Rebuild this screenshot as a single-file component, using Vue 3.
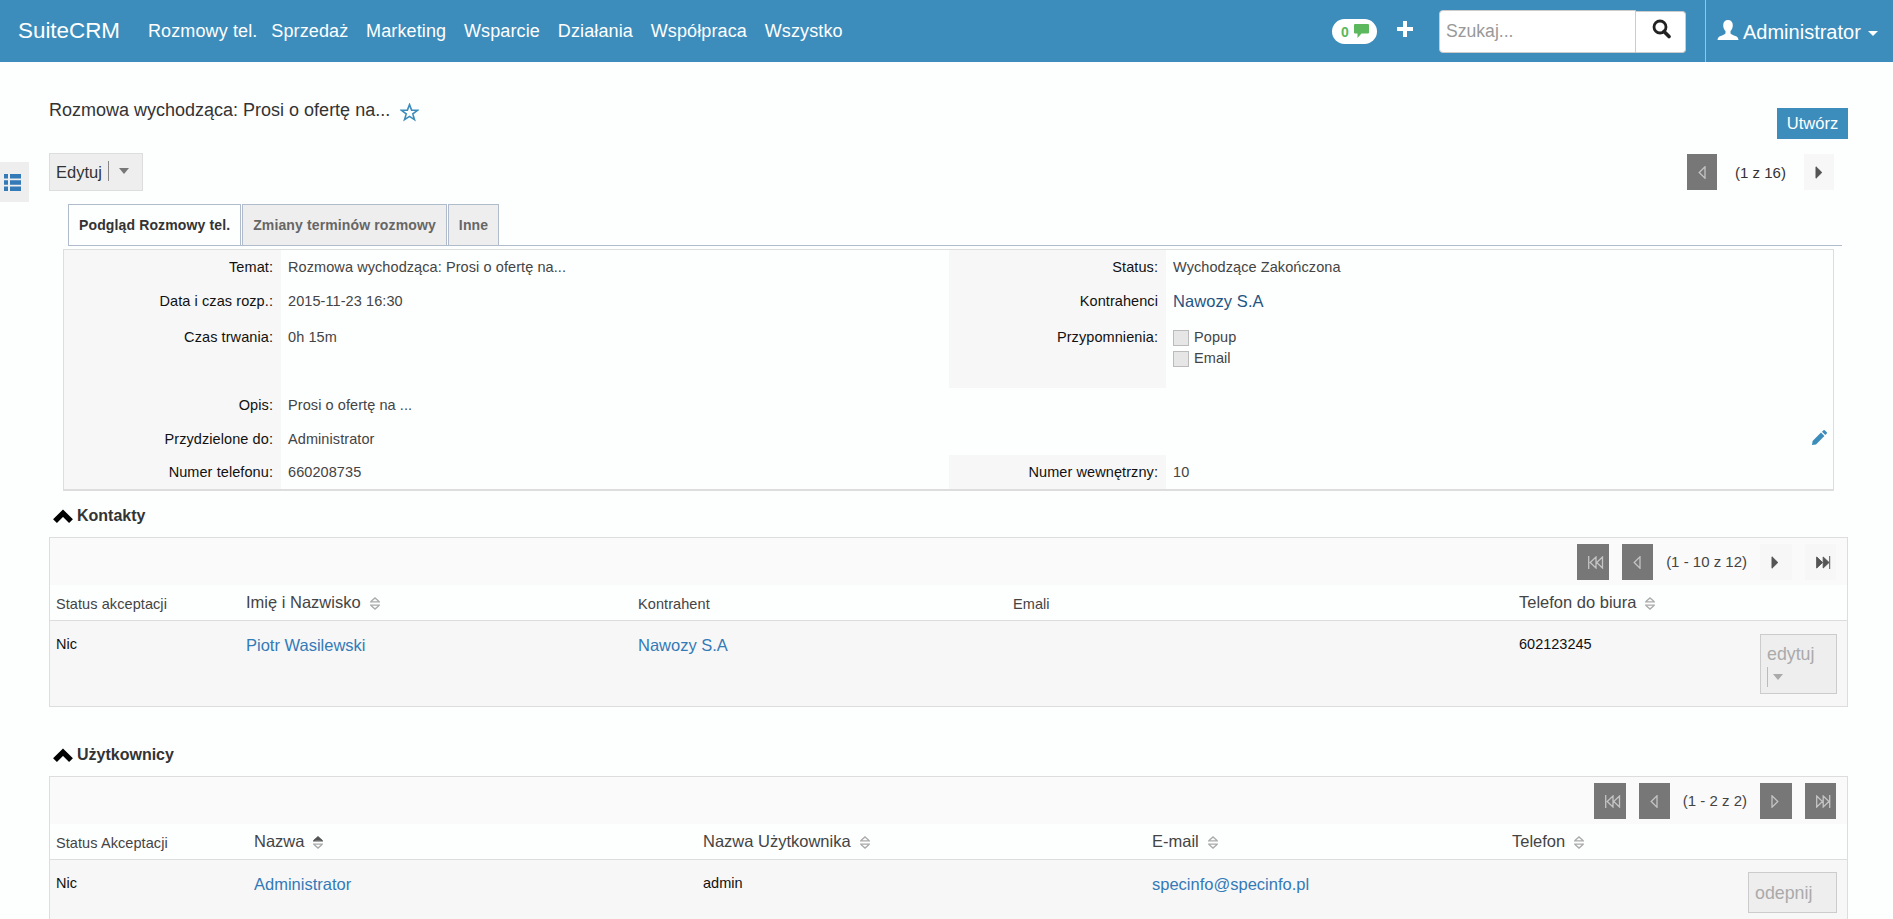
<template>
    <div class="page">
        <header class="navbar">
            <a class="brand">SuiteCRM</a>
            <nav class="menu">
                <a v-for="item in menu" :key="item">{{ item }}</a>
            </nav>

            <div class="badge">
                <span>0</span>
                <svg width="15" height="14" viewBox="0 0 15 14">
                    <path d="M1 0h13q1 0 1 1v7.500q0 1-1 1H7.500L3.500 14V9.500H1q-1 0-1-1V1q0-1 1-1z" fill="#5cb85c" />
                </svg>
            </div>
            <svg class="plus" width="16" height="16" viewBox="0 0 16 16">
                <path d="M6 0h4v6h6v4h-6v6H6v-6H0V6h6z" fill="#fff" />
            </svg>

            <div class="search">
                <input v-model="query" type="text" placeholder="Szukaj..." class="search-input" />
                <button class="search-btn">
                    <svg width="20" height="20" viewBox="0 0 20 20">
                        <circle cx="8" cy="8" r="6" fill="none" stroke="#222" stroke-width="2.800" />
                        <path d="M12 12.500l5 5" stroke="#222" stroke-width="3.600" stroke-linecap="round" />
                    </svg>
                </button>
            </div>

            <div class="user">
                <svg width="22" height="20" viewBox="0 0 22 20">
                    <path d="M11 0c3 0 4.800 2 4.800 5.200 0 2.400-.9 4.600-2.300 5.900v2.300c1 1.100 3.500 1.800 5.700 2.900 1.500.8 2 1.800 2.300 3.700H.5c.3-1.900.8-2.900 2.300-3.700 2.200-1.100 4.700-1.800 5.700-2.900v-2.300C7.100 9.800 6.200 7.600 6.200 5.200 6.200 2 8 0 11 0z" fill="#fff" />
                </svg>
                <span>Administrator</span>
                <i class="caret"></i>
            </div>
        </header>

        <div class="sidebar-toggle">
            <svg width="17" height="17" viewBox="0 0 17 17" fill="#337ab7">
                <path d="M0 0h4v4.500H0zM6 0h11v4.500H6zM0 6.200h4v4.500H0zM6 6.200h11v4.500H6zM0 12.400h4V17H0zM6 12.400h11V17H6z" />
            </svg>
        </div>

        <main class="content">
            <div class="title-row">
                <h2>Rozmowa wychodząca: Prosi o ofertę na...</h2>
                <svg class="star" width="19" height="19" viewBox="0 0 19 19">
                    <path d="M9.500 1.600l2.100 5.500 5.900.2-4.700 3.600 1.700 5.800-5-3.300-5 3.300 1.700-5.800L1.500 7.300l5.900-.2z" fill="none" stroke="#3c8dbc" stroke-width="1.600" />
                </svg>
                <button class="create-btn">Utwórz</button>
            </div>

            <div class="action-row">
                <button class="edit-btn">
                    <span>Edytuj</span>
                    <i class="split"></i>
                    <i class="arrow"></i>
                </button>
                <div class="record-pager">
                    <span class="pg off"><svg width="8" height="13" viewBox="0 0 8 13"><path :d="icons.prev" /></svg></span>
                    <span class="record-count">(1 z 16)</span>
                    <span class="pg"><svg width="8" height="13" viewBox="0 0 8 13"><path :d="icons.next" /></svg></span>
                </div>
            </div>

            <div class="tabs">
                <a v-for="(tab, i) in tabs" :key="tab" :class="{ active: activeTab === i }" @click="activeTab = i">{{ tab }}</a>
            </div>

            <div class="detail">
                <template v-for="row in details" :key="row.label">
                    <div class="label">{{ row.label }}</div>
                    <div class="value">{{ row.value }}</div>
                    <div :class="{ label: row.label2 }">{{ row.label2 }}</div>
                    <div class="value">
                        <a v-if="row.link" class="account">{{ row.link }}</a>
                        <div v-else-if="row.reminders" class="reminders">
                            <div v-for="name in row.reminders" :key="name" class="reminder">
                                <i class="checkbox"></i>{{ name }}
                            </div>
                        </div>
                        <svg v-else-if="row.pencil" class="pencil" width="15" height="15" viewBox="0 0 15 15">
                            <path d="M0 15l.6-4L9 2.600 12.400 6 4 14.400zM10 1.700L11.500.2q.6-.4 1.200 0l2.100 2.100q.4.600 0 1.200L13.300 5z" fill="#3c8dbc" />
                        </svg>
                        <template v-else>{{ row.value2 }}</template>
                    </div>
                </template>
            </div>

            <section v-for="panel in panels" :key="panel.title" class="subpanel" :class="panel.name">
                <h3>
                    <svg width="20" height="15" viewBox="0 0 20 15">
                        <path d="M2 12.200l8-8 8 8" fill="none" stroke="#000" stroke-width="5.400" />
                    </svg>
                    {{ panel.title }}
                </h3>
                <div class="list">
                    <div class="list-pager">
                        <span class="pg off wide"><svg width="16" height="13" viewBox="0 0 16 13"><path :d="icons.first" /></svg></span>
                        <span class="pg off"><svg width="8" height="13" viewBox="0 0 8 13"><path :d="icons.prev" /></svg></span>
                        <span class="count">{{ panel.count }}</span>
                        <span class="pg wide" :class="{ off: panel.last }"><svg width="8" height="13" viewBox="0 0 8 13"><path :d="icons.next" /></svg></span>
                        <span class="pg" :class="{ off: panel.last }"><svg width="16" height="13" viewBox="0 0 16 13"><path :d="icons.end" /></svg></span>
                    </div>
                    <div class="list-head cols">
                        <div v-for="col in panel.columns" :key="col.text" :class="{ sortable: col.sort }">
                            <span>{{ col.text }}</span>
                            <svg v-if="col.sort" width="10" height="13" viewBox="0 0 10 13" stroke="#aaa" stroke-width="1.300" fill="none">
                                <path d="M1.200 4.300L5 .9l3.800 3.400M0 4.800h10" :stroke="col.sort === 'asc' ? '#555' : '#aaa'" :fill="col.sort === 'asc' ? '#555' : 'none'" />
                                <path d="M1.200 8.700L5 12.100l3.800-3.400M0 8.200h10" />
                            </svg>
                        </div>
                    </div>
                    <div class="list-row cols">
                        <div v-for="(cell, i) in panel.cells" :key="i">
                            <a v-if="cell.link">{{ cell.link }}</a>
                            <span v-else>{{ cell.text }}</span>
                        </div>
                        <button class="row-btn">
                            <span>{{ panel.action }}</span>
                            <span v-if="panel.split" class="row-split"><i class="split"></i><i class="arrow"></i></span>
                        </button>
                    </div>
                </div>
            </section>
        </main>
    </div>
</template>

<script setup>
import { ref } from 'vue'

const query = ref('')
const activeTab = ref(0)

const menu = ['Rozmowy tel.', 'Sprzedaż', 'Marketing', 'Wsparcie', 'Działania', 'Współpraca', 'Wszystko']
const tabs = ['Podgląd Rozmowy tel.', 'Zmiany terminów rozmowy', 'Inne']

const icons = {
    first: 'M.7 0v13M8 1v11L2.200 6.500zM14.500 1v11L8.700 6.500z',
    prev: 'M7 .8v11.400L1.200 6.500z',
    next: 'M1 .8v11.400l5.800-5.700z',
    end: 'M.7 1v11l5.800-5.500zM7.200 1v11L13 6.500zM13.700 0v13'
}

const details = [
    { label: 'Temat:', value: 'Rozmowa wychodząca: Prosi o ofertę na...', label2: 'Status:', value2: 'Wychodzące Zakończona' },
    { label: 'Data i czas rozp.:', value: '2015-11-23 16:30', label2: 'Kontrahenci', link: 'Nawozy S.A' },
    { label: 'Czas trwania:', value: '0h 15m', label2: 'Przypomnienia:', reminders: ['Popup', 'Email'] },
    { label: 'Opis:', value: 'Prosi o ofertę na ...' },
    { label: 'Przydzielone do:', value: 'Administrator', pencil: true },
    { label: 'Numer telefonu:', value: '660208735', label2: 'Numer wewnętrzny:', value2: '10' }
]

const panels = [
    {
        name: 'contacts',
        title: 'Kontakty',
        count: '(1 - 10 z 12)',
        last: false,
        action: 'edytuj',
        split: true,
        columns: [
            { text: 'Status akceptacji' },
            { text: 'Imię i Nazwisko', sort: 'none' },
            { text: 'Kontrahent' },
            { text: 'Emali' },
            { text: 'Telefon do biura', sort: 'none' }
        ],
        cells: [{ text: 'Nic' }, { link: 'Piotr Wasilewski' }, { link: 'Nawozy S.A' }, { text: '' }, { text: '602123245' }]
    },
    {
        name: 'users',
        title: 'Użytkownicy',
        count: '(1 - 2 z 2)',
        last: true,
        action: 'odepnij',
        columns: [
            { text: 'Status Akceptacji' },
            { text: 'Nazwa', sort: 'asc' },
            { text: 'Nazwa Użytkownika', sort: 'none' },
            { text: 'E-mail', sort: 'none' },
            { text: 'Telefon', sort: 'none' }
        ],
        cells: [{ text: 'Nic' }, { link: 'Administrator' }, { text: 'admin' }, { link: 'specinfo@specinfo.pl' }, { text: '' }]
    }
]
</script>

<style>
body {
    margin: 0;
    background: #fdfefe;
}
</style>

<style scoped>
.page {
    position: relative;
    height: 919px;
    overflow: hidden;
    font-family: "Liberation Sans", Arial, sans-serif;
    font-size: 14.5px;
    color: #444;
}

.page * {
    box-sizing: border-box;
}

button {
    font-family: inherit;
    padding: 0;
    border-radius: 0;
}

svg {
    display: block;
    flex-shrink: 0;
}

.navbar {
    height: 62px;
    background: #3c8dbc;
    color: #fff;
    display: flex;
    align-items: center;
    padding-left: 18px;
}

.brand {
    width: 130px;
    font-size: 22.4px;
    line-height: 62px;
}

.menu {
    display: flex;
    gap: 17.8px;
    flex: 1;
    font-size: 18px;
    line-height: 62px;
    letter-spacing: 0.12px;
}

.menu a:first-child {
    margin-right: -4px;
}

.badge {
    display: flex;
    align-items: center;
    gap: 5px;
    width: 45px;
    height: 25px;
    padding-left: 9px;
    margin-right: 20px;
    border-radius: 13px;
    background: #fff;
    color: #5cb85c;
    font-size: 14px;
    font-weight: bold;
}

.badge span {
    padding-top: 2px;
}

.plus {
    margin: -4px 26px 0 0;
}

.search {
    display: flex;
    align-items: flex-end;
    margin-right: 19px;
}

.search-input {
    width: 197px;
    height: 43px;
    padding: 0 0 0 6px;
    border: 1px solid #ccc;
    border-radius: 4px 0 0 4px;
    font-family: inherit;
    font-size: 17.6px;
    background: #fff;
}

.search-input::placeholder {
    color: #999;
}

.search-btn {
    width: 50px;
    height: 42px;
    padding: 0 0 5px 16px;
    border: 1px solid #ccc;
    border-left: 0;
    border-radius: 0 4px 4px 0;
    background: #fff;
}

.user {
    display: flex;
    align-items: center;
    width: 188px;
    height: 62px;
    padding-left: 11px;
    border-left: 1px solid #a6bfd8;
    font-size: 20px;
}

.user svg {
    margin: -2px 4px 0 0;
}

.user span {
    padding-top: 2px;
}

.caret {
    margin: 5px 0 0 7px;
    border: 5px solid transparent;
    border-top-color: #fff;
    border-bottom: 0;
}

/* floats over the left page margin */
.sidebar-toggle {
    position: absolute;
    left: 0;
    top: 162px;
    width: 29px;
    height: 40px;
    padding: 12px 0 0 4px;
    background: #eee;
}

.content {
    padding: 0 45px 0 49px;
}

.title-row {
    display: flex;
    height: 91px;
    padding-top: 36px;
}

.title-row h2 {
    margin: 0;
    font-size: 18px;
    font-weight: normal;
    line-height: 24px;
    color: #333;
}

.star {
    margin: 5px 0 0 10px;
}

.create-btn {
    width: 71px;
    height: 31px;
    margin: 10px 0 0 auto;
    border: 0;
    background: #3c8dbc;
    color: #fff;
    font-size: 16.5px;
}

.action-row {
    display: flex;
    justify-content: space-between;
    height: 51px;
}

.edit-btn {
    display: flex;
    align-items: center;
    width: 94px;
    height: 38px;
    padding-left: 6px;
    border: 1px solid #ddd;
    background: #eee;
    color: #333;
    font-size: 16.5px;
}

.split {
    width: 1px;
    height: 20px;
    background: #888;
}

.edit-btn .split {
    margin: -3px 10px 0 6px;
}

.arrow {
    border: 5.5px solid transparent;
    border-top: 6px solid #777;
    border-bottom: 0;
}

.edit-btn .arrow {
    margin-top: -3px;
}

.record-pager {
    display: flex;
    align-items: center;
    width: 161px;
    height: 36px;
    margin: 1px 14px 0 0;
    justify-content: flex-end;
    color: #333;
}

.record-pager .pg {
    width: 30px;
}

.record-count {
    width: 87px;
    text-align: center;
    font-size: 15px;
}

.pg {
    display: flex;
    align-items: center;
    width: 31px;
    height: 36px;
    padding-left: 11px;
    background: #f7f7f7;
}

.pg path {
    fill: #555;
    stroke: #555;
}

.pg.off {
    background: #777;
}

.pg.off path {
    fill: none;
    stroke: #c4c4c4;
    stroke-width: 1.3;
}

.pg.wide {
    width: 32px;
}

.tabs {
    display: flex;
    gap: 1px;
    height: 42px;
    margin: 0 6px 3px 0;
    padding-left: 19px;
    background: linear-gradient(#b0bccc, #b0bccc) 19px 100% / 100% 1px no-repeat;
}

.tabs a {
    padding: 0 10px;
    border: 1px solid #b0bccc;
    background: #eee;
    color: #666;
    font-size: 14px;
    font-weight: bold;
    line-height: 40px;
    letter-spacing: 0.13px;
}

.tabs a.active {
    background: #fdfefe;
    color: #333;
}

.detail {
    display: grid;
    grid-template-columns: 217px 668px 217px 1fr;
    grid-template-rows: 34px 36px 68px 34px 33px 34px;
    margin: 0 14px 0 14px;
    border: 1px solid #ddd;
    border-bottom-width: 2px;
    line-height: 20px;
    letter-spacing: 0.08px;
}

.label {
    padding: 7px 8px 0 0;
    background: #f7f7f7;
    color: #111;
    text-align: right;
}

.value {
    padding: 7px 7px 0 7px;
}

.account {
    color: #1f5582;
    font-size: 16.5px;
}

.reminders {
    margin-top: -1px;
}

.reminder {
    display: flex;
    align-items: center;
    height: 21px;
}

.checkbox {
    width: 16px;
    height: 16px;
    margin: 2px 5px 0 0;
    border: 1px solid #bbb;
    background: #e6e6e6;
}

.pencil {
    margin: 1px -1px 0 auto;
}

.subpanel h3 {
    display: flex;
    align-items: center;
    gap: 4px;
    height: 46px;
    margin: 0;
    padding: 4px 0 0 4px;
    font-size: 16px;
    color: #333;
}

.contacts {
    margin-bottom: 23px;
}

.list {
    border: 1px solid #ddd;
}

.list-pager {
    display: flex;
    justify-content: flex-end;
    height: 47px;
    padding: 6px 11px 0 0;
    gap: 13px;
    background: #fafafa;
}

.list-pager .count {
    line-height: 36px;
    font-size: 15px;
}

.cols {
    display: grid;
    border-bottom: 1px solid #ddd;
    padding-left: 6px;
}

.contacts .cols {
    grid-template-columns: 190px 392px 375px 506px 241px auto;
}

.users .cols {
    grid-template-columns: 198px 449px 449px 360px 236px auto;
}

.list-head {
    height: 36px;
    line-height: 38px;
    letter-spacing: 0.08px;
}

.list-head .sortable {
    display: flex;
    align-items: center;
    gap: 9px;
    height: 34px;
    font-size: 16.5px;
    line-height: 34px;
    letter-spacing: 0;
}

.sortable svg {
    margin-top: 2px;
}

.list-row {
    height: 86px;
    background: #f7f7f7;
    color: #111;
    line-height: 20px;
    padding-top: 13px;
}

.contacts .list-row {
    height: 85px;
    border-bottom: 0;
}

.list-row a {
    display: block;
    padding-top: 1px;
    color: #337ab7;
    font-size: 16.5px;
}

.row-btn {
    display: flex;
    flex-direction: column;
    align-items: flex-start;
    width: 77px;
    height: 60px;
    padding: 8px 0 0 6px;
    border: 1px solid #ccc;
    background: #eee;
    color: #aaa;
    font-size: 17.8px;
    line-height: 22px;
}

.users .row-btn {
    width: 89px;
    height: 41px;
    padding-top: 9px;
    margin-top: -1px;
}

.row-split {
    display: flex;
    align-items: center;
    gap: 5px;
    padding-top: 2px;
}

.row-split .split {
    background: #bbb;
}

.row-split .arrow {
    border-top-color: #aaa;
}
</style>
